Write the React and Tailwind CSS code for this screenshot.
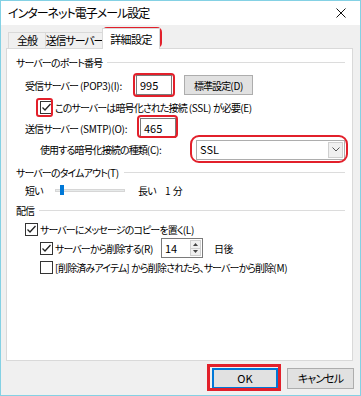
import React from 'react';

// CJK runs keep the tight tracking of the parent; ASCII runs get their own tracking
const T = ({ children }) =>
  children
    .split(/([\x20-\x7e]+)/)
    .filter(Boolean)
    .map((s, i) =>
      /^[\x20-\x7e]+$/.test(s) ? (
        <span key={i} className="tracking-[-0.3px]">{s}</span>
      ) : (
        <span key={i}>{s}</span>
      )
    );

const Check = ({ checked }) => (
  <span className="flex h-[13px] w-[13px] shrink-0 items-center justify-center border border-[#333] bg-white">
    {checked && (
      <svg width="11" height="11" viewBox="0 0 11 11">
        <polyline points="1.5,5.5 4,8 9.5,2" fill="none" stroke="#222" strokeWidth="1.3" />
      </svg>
    )}
  </span>
);

const GroupHeader = ({ children }) => (
  <div className="flex h-[16px] items-center pl-[9px] pr-[7px]">
    <span><T>{children}</T></span>
    <span className="ml-[5px] h-px flex-1 bg-[#dcdcdc]" />
  </div>
);

const TextBox = ({ value, className }) => (
  <div className={`flex h-[20px] shrink-0 items-center border border-[#7a7a7a] bg-white pl-[3px] text-[11px] tracking-normal ${className}`}>
    {value}
  </div>
);

const Mark = ({ className }) => (
  <div className={`pointer-events-none absolute border-2 border-[#e2202b] ${className}`} />
);

export default function App() {
  return (
    <div className="relative h-[396px] w-[361px] overflow-hidden whitespace-nowrap border border-[#84d1e4] bg-[#f0f0f0] font-['Noto_Sans_CJK_JP',sans-serif] text-[10px] tracking-[-0.9px] text-black [font-feature-settings:'palt']">
      {/* title bar */}
      <div className="flex h-[24px] items-center justify-between bg-white pl-[7px] pr-[14px]">
        <span className="text-[12px] tracking-[-1px]">インターネット電子メール設定</span>
        <svg width="10" height="10" viewBox="0 0 10 10">
          <path d="M0.5 0.5 L9.5 9.5 M9.5 0.5 L0.5 9.5" stroke="#111" strokeWidth="1" />
        </svg>
      </div>

      {/* tabs */}
      <div className="flex h-[23px] items-end pl-[7px] text-[11px]">
        <div className="flex h-[16px] w-[38px] items-center justify-center border border-b-0 border-[#d9d9d9] bg-[#f0f0f0]">全般</div>
        <div className="-ml-px flex h-[16px] w-[59px] items-center justify-center border border-b-0 border-[#d9d9d9] bg-[#f0f0f0] tracking-[-1.1px]">送信サーバー</div>
        <div className="relative z-10 -mb-px -ml-[2px] flex h-[21px] w-[58px] items-center justify-center border border-b-0 border-[#d9d9d9] bg-white tracking-[-0.6px]">詳細設定</div>
      </div>

      {/* panel */}
      <div className="ml-[5px] flex h-[313px] w-[347px] flex-col border border-[#d9d9d9] bg-white">
        <div className="mt-[5px]">
          <GroupHeader>サーバーのポート番号</GroupHeader>
        </div>

        <div className="mt-[5px] flex h-[20px] items-center pl-[18px]">
          <span className="w-[111px] shrink-0"><T>受信サーバー (POP3)(I):</T></span>
          <TextBox value="995" className="w-[36px]" />
          <div className="ml-[12px] flex h-[20px] w-[69px] items-center justify-center border border-[#adadad] bg-[#e1e1e1]"><T>標準設定(D)</T></div>
        </div>

        <div className="mt-[4px] flex h-[16px] items-center pl-[33px]">
          <Check checked />
          <span className="ml-[2px]"><T>このサーバーは暗号化された接続 (SSL) が必要(E)</T></span>
        </div>

        <div className="mt-[3px] flex h-[20px] items-center pl-[18px]">
          <span className="w-[115px] shrink-0"><T>送信サーバー (SMTP)(O):</T></span>
          <TextBox value="465" className="w-[36px]" />
        </div>

        <div className="mt-[1px] flex h-[21px] items-center pl-[33px]">
          <span className="w-[156px] shrink-0"><T>使用する暗号化接続の種類(C):</T></span>
          <div className="flex h-[20px] w-[149px] items-center justify-between border border-[#adadad] bg-white pl-[3px] pr-px text-[11px] tracking-normal">
            <span>SSL</span>
            <span className="flex h-[16px] w-[15px] items-center justify-center border border-[#cfcfcf] bg-[#f0f0f0]">
              <svg width="8" height="5" viewBox="0 0 8 5">
                <polyline points="0.5,0.5 4,4 7.5,0.5" fill="none" stroke="#555" strokeWidth="1" />
              </svg>
            </span>
          </div>
        </div>

        <div className="mt-[4px]">
          <GroupHeader>サーバーのタイムアウト(T)</GroupHeader>
        </div>

        <div className="flex h-[20px] items-center pl-[18px]">
          <span className="w-[30px] shrink-0">短い</span>
          <div className="relative flex h-[12px] w-[70px] shrink-0 items-center">
            <div className="h-[3px] w-full border border-[#d6d6d6] bg-[#e7eaea]" />
            <div className="absolute left-[5px] top-[1px] h-[10px] w-[4px] bg-[#0078d7]" />
          </div>
          <span className="ml-[13px] w-[27px] shrink-0">長い</span>
          <span><span className="tracking-normal">1 </span> 分</span>
        </div>

        <div className="mt-[2px]">
          <GroupHeader>配信</GroupHeader>
        </div>

        <div className="mt-[3px] flex h-[16px] items-center pl-[18px]">
          <Check checked />
          <span className="ml-[2px]"><T>サーバーにメッセージのコピーを置く(L)</T></span>
        </div>

        <div className="mt-[1px] flex h-[20px] items-center pl-[33px]">
          <Check checked />
          <span className="ml-[2px] w-[106px] shrink-0"><T>サーバーから削除する(R)</T></span>
          <div className="flex h-[20px] w-[42px] shrink-0 items-center border border-[#7a7a7a] bg-white pl-[3px] text-[11px] tracking-normal">
            <span className="flex-1">14</span>
            <span className="mr-px flex h-[16px] w-[11px] flex-col border border-[#cfcfcf] bg-[#f0f0f0]">
              <span className="flex flex-1 items-center justify-center border-b border-[#cfcfcf]">
                <svg width="5" height="3" viewBox="0 0 5 3"><polygon points="0,3 2.5,0 5,3" fill="#444" /></svg>
              </span>
              <span className="flex flex-1 items-center justify-center">
                <svg width="5" height="3" viewBox="0 0 5 3"><polygon points="0,0 5,0 2.5,3" fill="#444" /></svg>
              </span>
            </span>
          </div>
          <span className="ml-[11px] tracking-[-0.6px]">日後</span>
        </div>

        <div className="mt-[1px] flex h-[16px] items-center pl-[33px]">
          <Check />
          <span className="ml-[2px]"><T>[削除済みアイテム] から削除されたら、サーバーから削除(M)</T></span>
        </div>
      </div>

      {/* buttons */}
      <div className="mt-[7px] flex justify-end gap-[9px] pr-[6px] text-[11px]">
        <div className="flex h-[21px] w-[66px] items-center justify-center border border-[#0078d7] bg-[#e1e1e1] tracking-normal shadow-[inset_0_0_0_1px_#0078d7]">OK</div>
        <div className="flex h-[21px] w-[67px] items-center justify-center border border-[#adadad] bg-[#e1e1e1]">キャンセル</div>
      </div>

      {/* red annotation marks */}
      <Mark className="left-[101px] top-[26px] h-[21px] w-[60px] rounded-[5px]" />
      <Mark className="left-[132px] top-[72px] h-[24px] w-[42px] rounded-[4px]" />
      <Mark className="left-[35px] top-[97px] h-[19px] w-[17px] rounded-[3px]" />
      <Mark className="left-[136px] top-[114px] h-[23px] w-[41px] rounded-[4px]" />
      <Mark className="left-[189px] top-[134px] h-[28px] w-[158px] rounded-[9px]" />
      <Mark className="left-[206px] top-[363px] h-[27px] w-[74px] border-[3px]" />
    </div>
  );
}
